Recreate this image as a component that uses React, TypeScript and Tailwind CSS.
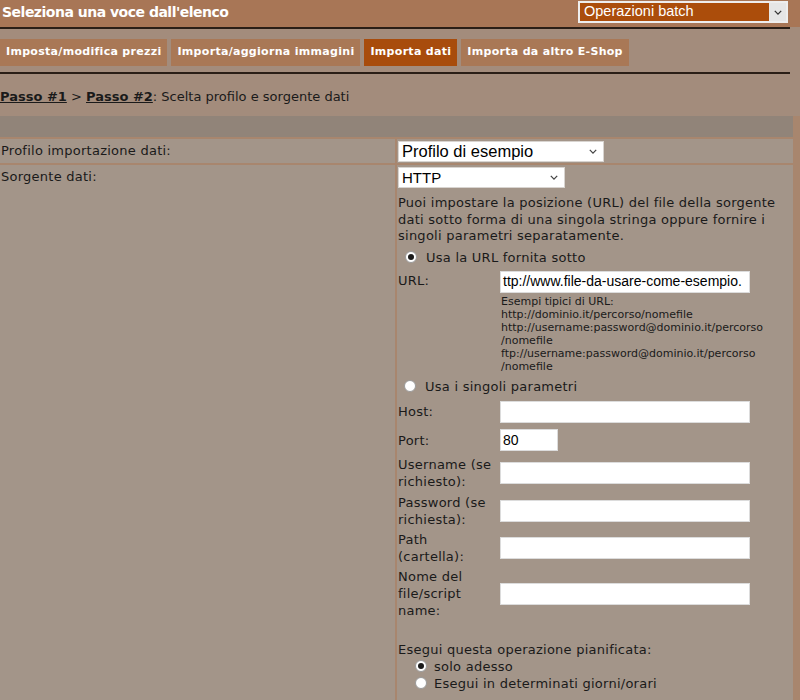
import React from "react";

const font = { fontFamily: '"DejaVu Sans", Verdana, sans-serif' };
const arial = { fontFamily: '"Liberation Sans", Arial, sans-serif' };

function Chevron({ className }: { className?: string }) {
  return (
    <svg viewBox="0 0 10 6" className={className} fill="none" stroke="currentColor" strokeWidth="1.6">
      <path d="M1 1l4 4 4-4" />
    </svg>
  );
}

function FakeSelect({ value, width, size }: { value: string; width: string; size: string }) {
  return (
    <div
      className={`flex h-[21px] items-center justify-between border border-[#d8d4d0] bg-white pl-[3px] pr-[6px] tracking-normal text-black ${width} ${size}`}
      style={arial}
    >
      <span>{value}</span>
      <Chevron className="h-[5px] w-[8px] text-[#444]" />
    </div>
  );
}

function Radio({ checked }: { checked?: boolean }) {
  return (
    <span className="flex h-[12px] w-[12px] shrink-0 items-center justify-center rounded-full border border-[#9a9a9a] bg-white">
      {checked && <span className="h-[6px] w-[6px] rounded-full bg-[#1a1a1a]" />}
    </span>
  );
}

function TextInput({ value, width = "w-[250px]" }: { value?: string; width?: string }) {
  return (
    <div
      className={`flex h-[22px] items-center overflow-hidden whitespace-nowrap border border-[#dcdcdc] bg-white pl-[2px] text-[14px] tracking-normal text-black ${width}`}
      style={arial}
    >
      {value}
    </div>
  );
}

const fields = [
  { label: ["Host:"], h: "h-[28px]" },
  { label: ["Port:"], h: "h-[29px]", value: "80", width: "w-[58px]" },
  { label: ["Username (se", "richiesto):"], h: "h-[37px]" },
  { label: ["Password (se", "richiesta):"], h: "h-[38px]" },
  { label: ["Path", "(cartella):"], h: "h-[36px]" },
  { label: ["Nome del", "file/script", "name:"], h: "h-[56px]" },
];

const tabs = [
  { name: "Imposta/modifica prezzi", active: false },
  { name: "Importa/aggiorna immagini", active: false },
  { name: "Importa dati", active: true },
  { name: "Importa da altro E-Shop", active: false },
];

export default function App() {
  return (
    <div className="h-[700px] w-[800px] overflow-hidden bg-[#a38c7c] text-[#1a1a1a]" style={font}>
      {/* header */}
      <div className="flex h-[27px] items-start justify-between bg-[#a87656] pr-[12px]">
        <h1 className="pl-[2px] pt-[3px] text-[14px] font-bold leading-[18px] tracking-[-0.5px] text-white">
          Seleziona una voce dall'elenco
        </h1>
        <div className="mt-[1px] flex h-[22px] w-[210px] items-center justify-between border-2 border-[#eee] bg-[#ab4d0b] pl-[4px]">
          <span className="text-[14.5px] text-white" style={arial}>
            Operazioni batch
          </span>
          <span className="flex h-full w-[17px] items-center justify-center bg-[#e6e6e6]">
            <Chevron className="h-[5px] w-[8px] text-[#333]" />
          </span>
        </div>
      </div>
      <div className="h-[2px] w-[790px] bg-[#2a1e16]" />

      {/* tabs */}
      <div className="mt-[10px] flex gap-[4px]">
        {tabs.map((t) => (
          <div
            key={t.name}
            className={`flex h-[27px] items-center px-[6px] text-[11px] font-bold tracking-[0.3px] text-white ${
              t.active ? "bg-[#a84c0c]" : "bg-[#a97856]"
            }`}
          >
            {t.name}
          </div>
        ))}
      </div>
      <div className="mt-[6px] h-[2px] w-[790px] bg-[#2a1e16]" />

      {/* breadcrumb */}
      <div className="flex h-[42px] items-center pt-[3px] text-[13px]">
        <span className="font-bold underline">Passo #1</span>
        <span>&nbsp;&gt;&nbsp;</span>
        <span className="font-bold underline">Passo #2</span>
        <span>: Scelta profilo e sorgente dati</span>
      </div>

      {/* form table */}
      <div className="bg-[#a8866e] pr-[7px] text-[13px] tracking-[0.25px]">
        <div className="h-[21px] bg-[#918479]" />
        <div className="mt-[2px] grid grid-cols-[395px_1fr] gap-[2px]">
          <div className="flex h-[24px] items-center bg-[#a39589] pl-[1px]">Profilo importazione dati:</div>
          <div className="flex h-[24px] items-center bg-[#a39589] pl-[1px]">
            <FakeSelect value="Profilo di esempio" width="w-[206px]" size="text-[16.5px]" />
          </div>

          <div className="h-[560px] bg-[#a39589] pl-[1px] pt-[3px] leading-[17px]">Sorgente dati:</div>
          <div className="h-[560px] bg-[#a39589] pl-[1px] pt-[2px] leading-[17px]">
            <FakeSelect value="HTTP" width="w-[167px]" size="text-[15px]" />
            <p className="mt-[7px] leading-[16.5px]">
              Puoi impostare la posizione (URL) del file della sorgente dati sotto forma di una singola stringa
              oppure fornire i singoli parametri separatamente.
            </p>

            <div className="mt-[4px] flex h-[17px] items-center gap-[9px] pl-[7px]">
              <Radio checked />
              <span>Usa la URL fornita sotto</span>
            </div>

            <div className="mt-[5px] flex">
              <div className="w-[102px] pt-[1px]">URL:</div>
              <div>
                <TextInput value="ttp://www.file-da-usare-come-esempio." />
                <div className="mt-[2px] pl-[1px] text-[11px] leading-[13px] tracking-normal">
                  Esempi tipici di URL:
                  <br />
                  http://dominio.it/percorso/nomefile
                  <br />
                  http://username:password@dominio.it/percorso
                  <br />
                  /nomefile
                  <br />
                  ftp://username:password@dominio.it/percorso
                  <br />
                  /nomefile
                </div>
              </div>
            </div>

            <div className="mt-[5px] flex h-[17px] items-center gap-[9px] pl-[6px]">
              <Radio />
              <span>Usa i singoli parametri</span>
            </div>

            <div className="mt-[3px] flex flex-col">
              {fields.map((f) => (
                <div key={f.label.join()} className={`flex items-center ${f.h}`}>
                  <div className="w-[102px] leading-[17px]">
                    {f.label.map((l) => (
                      <div key={l}>{l}</div>
                    ))}
                  </div>
                  <TextInput value={f.value} width={f.width} />
                </div>
              ))}
            </div>

            <div className="mt-[19px]">Esegui questa operazione pianificata:</div>
            <div className="flex h-[17px] items-center gap-[7px] pl-[17px]">
              <Radio checked />
              <span>solo adesso</span>
            </div>
            <div className="flex h-[17px] items-center gap-[7px] pl-[17px]">
              <Radio />
              <span>Esegui in determinati giorni/orari</span>
            </div>
          </div>
        </div>
      </div>
    </div>
  );
}
